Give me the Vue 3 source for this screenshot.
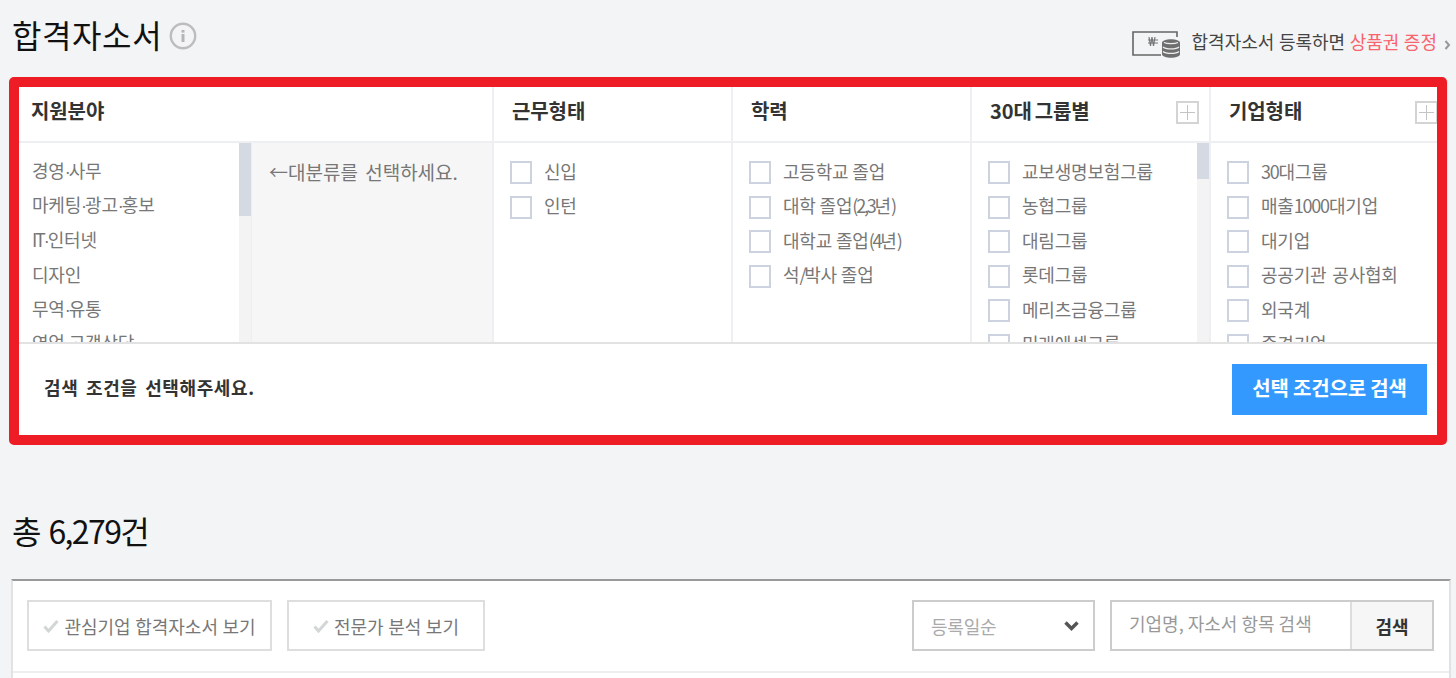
<script setup>
const fields = ['경영·사무', '마케팅·광고·홍보', 'IT·인터넷', '디자인', '무역·유통', '영업·고객상담']
const types = ['신입', '인턴']
const schools = ['고등학교 졸업', '대학 졸업(2,3년)', '대학교 졸업(4년)', '석/박사 졸업']
const groups = ['교보생명보험그룹', '농협그룹', '대림그룹', '롯데그룹', '메리츠금융그룹', '미래에셋그룹']
const companies = ['30대그룹', '매출1000대기업', '대기업', '공공기관 공사협회', '외국계', '중견기업']

// latin, digits and dots sit tighter than hangul in the original font
function segs(text) {
  return text.match(/[가-힣 ]+|·|[^가-힣 ·]+/g)
}

function segClass(s) {
  if (s === '·') return 'dot'
  return /[가-힣]/.test(s) ? '' : 'narrow'
}
</script>

<template>
  <div class="page">
    <div class="top">
      <div class="title-wrap">
        <h1>합격자소서</h1>
        <svg class="info" width="28" height="28" viewBox="0 0 28 28">
          <circle cx="14" cy="14" r="12.2" fill="none" stroke="#bdbdbd" stroke-width="2.400" />
          <rect x="12.500" y="12" width="3" height="8" fill="#b5b5b5" />
          <rect x="12.500" y="8" width="3" height="2.600" fill="#b5b5b5" />
        </svg>
      </div>
      <div class="promo">
        <svg class="promo-icon" width="48" height="28" viewBox="0 0 48 28">
          <path d="M45 6V1H1v23h28" fill="none" stroke="#666" stroke-width="1.600" />
          <path d="M17 6l1.500 9 1.500-9 1.500 9 1.500-9M16 9h10M16 12h10" fill="none" stroke="#777" stroke-width="1.200" />
          <path d="M30 12c0-5 18-5 18 0v11c0 5-18 5-18 0z" fill="#6f6f6f" />
          <path d="M31 16c3 2.500 13 2.500 16 0M31 20.500c3 2.500 13 2.500 16 0M32 11.500c3 1.500 11 1.500 14 0" fill="none" stroke="#eee" stroke-width="1.200" />
        </svg>
        <span>합격자소서 등록하면 <em>상품권 증정</em></span>
        <svg class="promo-arrow" width="7" height="10" viewBox="0 0 7 10">
          <path d="M1.500 1l3.500 4-3.500 4" fill="none" stroke="#999" stroke-width="2" />
        </svg>
      </div>
    </div>

    <div class="filter">
      <div class="cols">
        <div class="col col-field">
          <div class="col-head">지원분야</div>
          <div class="field-body">
            <ul class="list tight">
              <li v-for="f in fields" :key="f">
                <span><span v-for="(s, i) in segs(f)" :key="i" :class="segClass(s)">{{ s }}</span></span>
              </li>
            </ul>
            <div class="scroll"><div class="thumb thumb-field"></div></div>
            <div class="sub">←대분류를 선택하세요.</div>
          </div>
        </div>
        <div class="col">
          <div class="col-head">근무형태</div>
          <ul class="list">
            <li v-for="t in types" :key="t"><i class="check"></i>{{ t }}</li>
          </ul>
        </div>
        <div class="col">
          <div class="col-head">학력</div>
          <ul class="list tight">
            <li v-for="x in schools" :key="x">
              <i class="check"></i>
              <span><span v-for="(s, i) in segs(x)" :key="i" :class="segClass(s)">{{ s }}</span></span>
            </li>
          </ul>
        </div>
        <div class="col">
          <div class="col-head">30대 그룹별<span class="plus"></span></div>
          <div class="scroll-body">
            <ul class="list">
              <li v-for="g in groups" :key="g"><i class="check"></i>{{ g }}</li>
            </ul>
            <div class="scroll"><div class="thumb thumb-group"></div></div>
          </div>
        </div>
        <div class="col col-last">
          <div class="col-head">기업형태<span class="plus"></span></div>
          <ul class="list">
            <li v-for="c in companies" :key="c">
              <i class="check"></i>
              <span><span v-for="(s, i) in segs(c)" :key="i" :class="segClass(s)">{{ s }}</span></span>
            </li>
          </ul>
        </div>
      </div>
      <div class="filter-foot">
        <strong>검색 조건을 선택해주세요.</strong>
        <button class="go">선택 조건으로 검색</button>
      </div>
    </div>

    <h2>총 6,279건</h2>

    <div class="result">
      <div class="toolbar">
        <div class="toggles">
          <button class="toggle toggle-a"><svg class="tick" width="16" height="14" viewBox="0 0 16 14"><path d="M1.500 7.500l4 4.500 9-10" fill="none" stroke="#d2d6d6" stroke-width="3" /></svg>관심기업 합격자소서 보기</button>
          <button class="toggle toggle-b"><svg class="tick" width="16" height="14" viewBox="0 0 16 14"><path d="M1.500 7.500l4 4.500 9-10" fill="none" stroke="#d2d6d6" stroke-width="3" /></svg>전문가 분석 보기</button>
        </div>
        <div class="tools">
          <div class="select">
            <span>등록일순</span>
            <svg width="15" height="10" viewBox="0 0 15 10"><path d="M1.500 1.500l6 6 6-6" fill="none" stroke="#555" stroke-width="3.400" /></svg>
          </div>
          <div class="search">
            <span class="placeholder">기업명, 자소서 항목 검색</span>
            <button class="search-btn">검색</button>
          </div>
        </div>
      </div>
    </div>
  </div>
</template>

<style scoped>
.page {
  width: 1456px;
  height: 678px;
  overflow: hidden;
  background: #f3f4f6;
  font-family: "Noto Sans CJK KR", "Noto Sans", sans-serif;
  color: #333;
}

.top {
  height: 77px;
  display: flex;
  justify-content: space-between;
  padding: 0 5px 0 12px;
}

.title-wrap {
  display: flex;
  align-items: center;
  height: 68px;
}

h1, h2 {
  margin: 0;
  font-weight: 400;
  font-size: 32px;
  color: #111;
}

h1 {
  letter-spacing: 0.6px;
}

.info {
  margin-left: 7px;
  margin-top: 4px;
}

.promo {
  display: flex;
  align-items: center;
  height: 30px;
  margin-top: 26px;
  font-size: 18px;
  word-spacing: 0.500px;
  color: #444;
  white-space: nowrap;
}

.promo-icon {
  margin-right: 12px;
  margin-top: 8px;
}

.promo-arrow {
  margin-left: 7px;
  margin-top: 8px;
}

.promo em {
  font-style: normal;
  color: #f9636d;
}

.filter {
  margin-left: 9px;
  width: 1438px;
  height: 368px;
  box-sizing: border-box;
  border: 10px solid #ee1c25;
  border-radius: 5px;
  background: #fff;
  overflow: hidden;
  box-shadow: 1px 0 0 #e2e3e6;
}

.cols {
  display: flex;
  height: 255px;
  width: 1450px;
  border-bottom: 2px solid #e2e2e2;
}

.col {
  width: 237px;
  flex: none;
  border-right: 2px solid #eeeff3;
  overflow: hidden;
}

.col-field {
  width: 473px;
}

.col-last {
  border-right: 0;
}

.col-head {
  height: 47px;
  padding: 0 0 7px 18px;
  border-bottom: 2px solid #eeeff3;
  display: flex;
  align-items: center;
  font-size: 20px;
  font-weight: 700;
  letter-spacing: -0.1px;
  word-spacing: -1.500px;
  color: #333;
  position: relative;
}

.col-field .col-head {
  padding-left: 12px;
}

.plus {
  position: absolute;
  left: 204px;
  top: 14px;
  width: 23px;
  height: 23px;
  box-sizing: border-box;
  border: 2px solid #d4d4d4;
  background:
    linear-gradient(#c4c4c4, #c4c4c4) center / 15px 1px no-repeat,
    linear-gradient(#c4c4c4, #c4c4c4) center / 1px 15px no-repeat,
    #fff;
}

.field-body,
.scroll-body {
  display: flex;
  height: 200px;
  overflow: hidden;
}

.field-body .list {
  width: 220px;
  box-sizing: border-box;
  flex: none;
  padding-left: 13px;
}

.scroll-body .list {
  flex: 1;
  min-width: 0;
}

.scroll {
  width: 12px;
  flex: none;
  height: 200px;
  background: #f3f3f3;
}

.thumb {
  background: #d5d9e2;
}

.thumb-field {
  height: 73px;
}

.thumb-group {
  height: 36px;
}

.sub {
  flex: 1;
  background: #f6f6f6;
  border-left: 1px solid #eeeff3;
  padding: 16px 0 0 17px;
  font-size: 19px;
  line-height: 26px;
  word-spacing: 3px;
  color: #777;
  white-space: nowrap;
}

.list {
  list-style: none;
  margin: 0;
  padding: 10.500px 0 0 16px;
  font-size: 18px;
  letter-spacing: -0.2px;
  word-spacing: 2px;
  color: #777;
}

.list li {
  height: 34.500px;
  line-height: 34.500px;
  display: flex;
  align-items: center;
  white-space: nowrap;
}

.narrow {
  letter-spacing: -1.200px;
}

.tight {
  word-spacing: 0;
}

.tight .narrow {
  letter-spacing: -2.200px;
}

.dot {
  font-family: "Liberation Sans", sans-serif;
  letter-spacing: -2px;
}

.check {
  width: 22px;
  height: 23px;
  flex: none;
  box-sizing: border-box;
  border: 2px solid #cdd2df;
  background: #fff;
  margin-right: 12px;
  margin-top: 4px;
}

.filter-foot {
  height: 91px;
  display: flex;
  align-items: center;
  justify-content: space-between;
  padding: 0 10px 0 25px;
}

.filter-foot strong {
  font-size: 18px;
  font-weight: 700;
  letter-spacing: 0.6px;
  word-spacing: 3px;
  color: #333;
  margin-bottom: 6px;
}

.go {
  width: 195px;
  height: 51px;
  border: 0;
  padding: 0 0 5px;
  background: #3399ff;
  color: #fff;
  font-family: inherit;
  font-size: 20px;
  font-weight: 700;
  letter-spacing: -0.2px;
}

h2 {
  margin: 67px 0 0 12px;
  height: 67px;
  line-height: 36px;
  letter-spacing: -1.600px;
  word-spacing: 3px;
}

.result {
  margin-left: 11px;
  width: 1440px;
  height: 120px;
  box-sizing: border-box;
  background: #fff;
  border-top: 2px solid #999;
  border-left: 2px solid #e2e2e2;
  border-right: 2px solid #e2e2e2;
}

.toolbar {
  height: 92px;
  border-bottom: 2px solid #eeeeee;
  box-sizing: border-box;
  display: flex;
  justify-content: space-between;
  padding: 19px 15px 0 14px;
}

.toggles,
.tools {
  display: flex;
  gap: 15px;
}

.toggle {
  height: 51px;
  box-sizing: border-box;
  border: 2px solid #dedede;
  background: #fff;
  padding: 0;
  display: flex;
  align-items: center;
  justify-content: center;
  font-family: inherit;
  font-size: 18px;
  word-spacing: 0.500px;
  color: #777;
  white-space: nowrap;
}

.toggle-a {
  width: 245px;
}

.toggle-b {
  width: 198px;
}

.tick {
  margin-right: 5px;
}

.select {
  width: 183px;
  height: 51px;
  box-sizing: border-box;
  border: 2px solid #cccccc;
  display: flex;
  align-items: center;
  justify-content: space-between;
  padding: 0 14px 0 17px;
  font-size: 18px;
  letter-spacing: -0.2px;
  color: #aaa;
}

.search {
  width: 324px;
  height: 51px;
  box-sizing: border-box;
  border: 2px solid #cccccc;
  display: flex;
  align-items: stretch;
}

.placeholder {
  flex: 1;
  padding-left: 17px;
  line-height: 43px;
  font-size: 18px;
  color: #999;
  white-space: nowrap;
}

.search-btn {
  width: 82px;
  border: 0;
  border-left: 2px solid #dddddd;
  padding: 0;
  background: #f6f6f6;
  font-family: inherit;
  font-size: 18px;
  font-weight: 700;
  color: #333;
}
</style>
